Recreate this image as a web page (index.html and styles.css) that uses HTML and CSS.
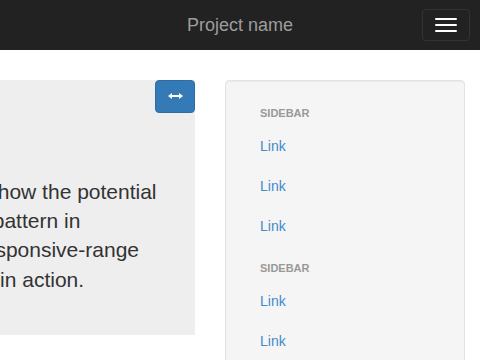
FILE: index.html
```html
<!DOCTYPE html>
<html lang="en">
<head>
<meta charset="utf-8">
<title>Off Canvas</title>
<link rel="stylesheet" href="styles.css">
</head>
<body>
<nav class="navbar">
  <span class="spacer"></span>
  <a class="brand" href="#">Project name</a>
  <button class="toggle" type="button" aria-label="Toggle navigation">
    <span class="bar"></span><span class="bar"></span><span class="bar"></span>
  </button>
</nav>
<div class="content">
  <main class="main">
    <p class="toggle-wrap">
      <button class="btn-primary" type="button" aria-label="Toggle sidebar">
        <svg width="15" height="6" viewBox="0 0 15 6"><path d="M0 3 L4 0 V2 H11 V0 L15 3 L11 6 V4 H4 V6 Z" fill="#fff"/></svg>
      </button>
    </p>
    <div class="jumbotron">
      <h1>Hello, world!</h1>
      <p>This is an example to show the potential of an offcanvas layout pattern in Bootstrap. Try some responsive-range viewport sizes to see it in action.</p>
    </div>
  </main>
  <aside class="sidebar">
    <ul class="nav">
      <li class="nav-header">Sidebar</li>
      <li><a href="#">Link</a></li>
      <li><a href="#">Link</a></li>
      <li><a href="#">Link</a></li>
      <li class="nav-header">Sidebar</li>
      <li><a href="#">Link</a></li>
      <li><a href="#">Link</a></li>
      <li><a href="#">Link</a></li>
    </ul>
  </aside>
</div>
</body>
</html>
```

FILE: styles.css
```css
* { box-sizing: border-box; }
html, body { margin: 0; padding: 0; }
body {
  font-family: "Liberation Sans", Arial, Helvetica, sans-serif;
  font-size: 14px;
  line-height: 1.42857;
  color: #333;
  background: #fff;
  overflow: hidden;
}
.navbar {
  height: 50px;
  background: #222;
  display: grid;
  grid-template-columns: 1fr auto 1fr;
  align-items: center;
  padding: 0 10px;
}
.brand {
  font-size: 18px;
  line-height: 50px;
  color: #9d9d9d;
  text-decoration: none;
}
.toggle {
  justify-self: end;
  width: 48px;
  height: 32px;
  padding: 8px 12px;
  background: transparent;
  border: 1px solid #333;
  border-radius: 4px;
  display: flex;
  flex-direction: column;
  gap: 4px;
  margin: 0;
}
.bar {
  display: block;
  width: 22px;
  height: 2px;
  background: #fff;
  border-radius: 1px;
}
.content {
  display: flex;
  align-items: flex-start;
  gap: 30px;
  margin-left: -230px;
  padding: 30px 15px 0 0;
}
.main {
  width: 425px;
  flex: none;
}
.toggle-wrap {
  float: right;
  margin: 0 0 10px;
}
.btn-primary {
  width: 40px;
  height: 33px;
  padding: 0 0 2px;
  margin: 0;
  background: #337ab7;
  border: 1px solid #2e6da4;
  border-radius: 4px;
  display: flex;
  align-items: center;
  justify-content: center;
}
.btn-primary svg { display: block; }
.jumbotron {
  background: #eee;
  padding: 30px 17px 26px 13px;
}
.jumbotron h1 {
  font-size: 36px;
  line-height: 1.1;
  font-weight: 500;
  margin: 17px 0 10px;
}
.jumbotron p {
  font-size: 21px;
  line-height: 1.4;
  margin: 0 0 15px;
}
.sidebar {
  width: 240px;
  flex: none;
  min-height: 400px;
  background: #f5f5f5;
  border: 1px solid #e3e3e3;
  border-radius: 4px;
  box-shadow: inset 0 1px 1px rgba(0,0,0,.05);
  padding: 19px;
}
.nav {
  list-style: none;
  margin: 0;
  padding: 0;
}
.nav a {
  display: block;
  padding: 10px 15px;
  line-height: 20px;
  color: #428bca;
  text-decoration: none;
}
.nav-header {
  padding: 3px 15px;
  font-size: 11px;
  font-weight: bold;
  line-height: 20px;
  text-transform: uppercase;
  color: #999;
}
.nav li:not(:first-child).nav-header { margin-top: 9px; }
```
